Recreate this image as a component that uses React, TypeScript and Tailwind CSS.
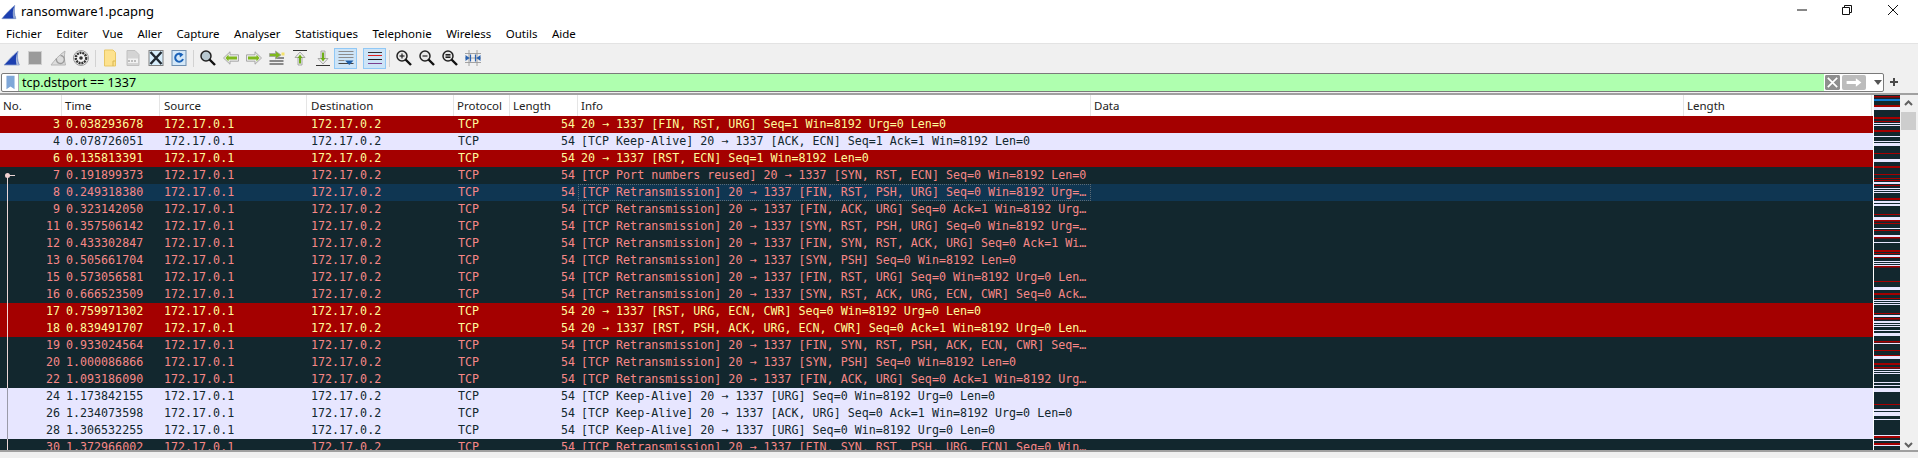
import type { ReactNode } from 'react';

const UI_FONT = "font-['Noto_Sans',sans-serif]";

type Kind = 'rst' | 'keep' | 'bad' | 'sel';

type Packet = { no: number; time: string; kind: Kind; info: string };

const RE = '[TCP Retransmission] 20 → 1337 ';
const KA = '[TCP Keep-Alive] 20 → 1337 ';

const packets: Packet[] = [
  { no: 3, time: '0.038293678', kind: 'rst', info: '20 → 1337 [FIN, RST, URG] Seq=1 Win=8192 Urg=0 Len=0' },
  { no: 4, time: '0.078726051', kind: 'keep', info: KA + '[ACK, ECN] Seq=1 Ack=1 Win=8192 Len=0' },
  { no: 6, time: '0.135813391', kind: 'rst', info: '20 → 1337 [RST, ECN] Seq=1 Win=8192 Len=0' },
  { no: 7, time: '0.191899373', kind: 'bad', info: '[TCP Port numbers reused] 20 → 1337 [SYN, RST, ECN] Seq=0 Win=8192 Len=0' },
  { no: 8, time: '0.249318380', kind: 'sel', info: RE + '[FIN, RST, PSH, URG] Seq=0 Win=8192 Urg=…' },
  { no: 9, time: '0.323142050', kind: 'bad', info: RE + '[FIN, ACK, URG] Seq=0 Ack=1 Win=8192 Urg…' },
  { no: 11, time: '0.357506142', kind: 'bad', info: RE + '[SYN, RST, PSH, URG] Seq=0 Win=8192 Urg=…' },
  { no: 12, time: '0.433302847', kind: 'bad', info: RE + '[FIN, SYN, RST, ACK, URG] Seq=0 Ack=1 Wi…' },
  { no: 13, time: '0.505661704', kind: 'bad', info: RE + '[SYN, PSH] Seq=0 Win=8192 Len=0' },
  { no: 15, time: '0.573056581', kind: 'bad', info: RE + '[FIN, RST, URG] Seq=0 Win=8192 Urg=0 Len…' },
  { no: 16, time: '0.666523509', kind: 'bad', info: RE + '[SYN, RST, ACK, URG, ECN, CWR] Seq=0 Ack…' },
  { no: 17, time: '0.759971302', kind: 'rst', info: '20 → 1337 [RST, URG, ECN, CWR] Seq=0 Win=8192 Urg=0 Len=0' },
  { no: 18, time: '0.839491707', kind: 'rst', info: '20 → 1337 [RST, PSH, ACK, URG, ECN, CWR] Seq=0 Ack=1 Win=8192 Urg=0 Len…' },
  { no: 19, time: '0.933024564', kind: 'bad', info: RE + '[FIN, SYN, RST, PSH, ACK, ECN, CWR] Seq=…' },
  { no: 20, time: '1.000086866', kind: 'bad', info: RE + '[SYN, PSH] Seq=0 Win=8192 Len=0' },
  { no: 22, time: '1.093186090', kind: 'bad', info: RE + '[FIN, ACK, URG] Seq=0 Ack=1 Win=8192 Urg…' },
  { no: 24, time: '1.173842155', kind: 'keep', info: KA + '[URG] Seq=0 Win=8192 Urg=0 Len=0' },
  { no: 26, time: '1.234073598', kind: 'keep', info: KA + '[ACK, URG] Seq=0 Ack=1 Win=8192 Urg=0 Len=0' },
  { no: 28, time: '1.306532255', kind: 'keep', info: KA + '[URG] Seq=0 Win=8192 Urg=0 Len=0' },
  { no: 30, time: '1.372966002', kind: 'bad', info: RE + '[FIN, SYN, RST, PSH, URG, ECN] Seq=0 Win…' },
];

const rowColors: Record<Kind, string> = {
  rst: 'bg-[#a40000] text-[#fffc9c]',
  keep: 'bg-[#e7e6ff] text-[#12272e]',
  bad: 'bg-[#12272e] text-[#f78787]',
  sel: 'bg-[#0f3652] text-[#f78787]',
};

const COLS = 'grid-cols-[62px_98px_147px_147px_56px_68px_513px_593px_188px]';

const menus = ['Fichier', 'Editer', 'Vue', 'Aller', 'Capture', 'Analyser', 'Statistiques', 'Telephonie', 'Wireless', 'Outils', 'Aide'];

// minimap stripes, real y px from the top of the minimap
const R = '#a40000';
const L = '#e7e6ff';
const stripes: [number, number, string][] = [
  [1, 1.5, R], [4, 2, '#0f78d0'], [10, 2, R], [12, 3, L], [22, 2, R], [26, 1, R], [28, 1, L], [30, 1, L],
  [35, 1, R], [36, 1, R], [41, 1, L], [46, 1, L], [48, 3, L], [58, 1, R], [64, 3, L], [71, 2, R], [79, 1, R],
  [83, 1, R], [85, 1, R], [87, 2, L], [90, 1, R], [93, 1, L], [95, 1, L], [97, 1, L], [103, 2, R], [106, 2, L],
  [109, 2, L], [119, 1, R], [122, 3, L], [125, 1.5, R], [128, 1, R], [133, 1, L], [135, 1, R], [140, 2, L],
  [142, 1.5, R], [147, 1, L], [155, 2, R], [158, 1, R], [160, 2, L], [162, 1, R], [166, 1, L], [168, 1, L],
  [170, 1, L], [171, 1.5, R], [186, 1, R], [192, 3, L], [198, 2, R], [203, 1, R], [205, 1, L], [207, 1, L],
  [209, 1, L], [218, 1, R], [220, 2, L], [223, 1.5, R], [226, 2, L], [229, 1, L], [231, 1, L], [235, 1, L],
  [238, 3, L], [246, 1.5, R], [248, 1, L], [255, 1, R], [260, 1, R], [261, 3, L], [268, 2, R], [272, 1.5, R],
  [274, 1, L], [276, 1, L], [278, 1, L], [287, 1, L], [290, 1, L], [293, 4, L], [309, 1, R], [314, 2, L],
  [317, 4, L], [324, 1, L], [340, 1, L], [341, 2, R], [345, 1, L], [348, 2, R], [350, 1, L],
];

function Fin({ className }: { className: string }) {
  return (
    <svg viewBox="0 0 18 16" className={className}>
      <path d="M1 15.500C4 12 9 6 15.500 .5c-1 5-.6 10 1.300 15z" fill="#1c3fb0" stroke="#7f96c8" strokeWidth=".7" />
      <path d="M15 1.500c-2 4-2.200 9-1 14h3c-2-4.500-2.500-9-2-14z" fill="#8fa4d0" />
    </svg>
  );
}

function Ic({ children, box }: { children: ReactNode; box?: boolean }) {
  return (
    <div className={`flex h-[21px] w-[23px] shrink-0 items-center justify-center ${box ? 'border border-[#90c8f6] bg-[#cde4f7]' : ''}`}>
      <svg viewBox="0 0 18 18" className="h-[18px] w-[18px]">{children}</svg>
    </div>
  );
}

function Sep() {
  return <div className="mx-[2.5px] h-[17px] w-px shrink-0 bg-[#d2d2d2]" />;
}

function Magnifier({ sign }: { sign?: '+' | '-' | '=' }) {
  return (
    <Ic>
      <circle cx="7" cy="7" r="5" fill={sign ? '#e8e8e8' : '#b8c8d0'} stroke="#222" strokeWidth="1.500" />
      <path d="M10.500 10.500l5.500 5.500" stroke="#111" strokeWidth="2.400" />
      {sign && <path d="M4.500 7h5" stroke="#222" strokeWidth="1.200" />}
      {sign === '+' && <path d="M7 4.500v5" stroke="#222" strokeWidth="1.200" />}
      {sign === '=' && <path d="M4.500 5.500h5M4.500 8.500h5" stroke="#222" strokeWidth="1.200" />}
    </Ic>
  );
}

function ArrowH({ dir }: { dir: 'l' | 'r' }) {
  return (
    <Ic>
      <g transform={dir === 'l' ? 'matrix(-1 0 0 1 18 0)' : undefined}>
        <path d="M1.500 5.800h8.500V2.800l6.500 6.200-6.500 6.200v-3H1.500z" fill="#ececec" stroke="#a0a0a0" strokeWidth=".9" />
        <path d="M3 7.500h8.500V5.500l3 3.500-3 3.500v-2H3z" fill="#7fb81e" />
      </g>
    </Ic>
  );
}

function ArrowV({ up }: { up?: boolean }) {
  return (
    <Ic>
      <g transform={up ? undefined : 'matrix(1 0 0 -1 0 18)'}>
        <path d="M2 1.500h14" stroke="#333" />
        <path d="M9 3l5 5.500h-3V16H7V8.500H4z" fill="#ececec" stroke="#a0a0a0" strokeWidth=".9" />
        <path d="M9 5.500l2.500 3.500H10v5.500H8V9H6.500z" fill="#6fae18" />
      </g>
    </Ic>
  );
}

function Toolbar() {
  return (
    <div className="flex h-[27px] items-center pt-[1px]">
      <Ic>
        <g transform="translate(1 2)">
          <path d="M0 14C3 11 8 5 14 0c-1 5-.6 9.500 1.300 14z" fill="#1c3fb0" stroke="#8ba0cc" strokeWidth=".8" />
          <path d="M13.500 1c-1.800 4-2 9-1 13h2.500c-1.800-4-2.200-8.500-1.500-13z" fill="#a8b8d8" />
        </g>
      </Ic>
      <Ic><rect x="2.500" y="2.500" width="13" height="13" fill="#9a9a9a" stroke="#cfcfcf" /></Ic>
      <Ic>
        <path d="M2 16C5 12 10 6 16 2c-1 5-.6 10 .5 14z" fill="#dcdcdc" stroke="#b4b4b4" />
        <path d="M11.500 6.500a4 4 0 1 1-4 3" fill="none" stroke="#9c9c9c" strokeWidth="1.400" />
      </Ic>
      <Ic>
        <circle cx="9" cy="9" r="7.500" fill="#f4f4f4" stroke="#9a9a9a" />
        <circle cx="9" cy="9" r="5.200" fill="none" stroke="#333" strokeWidth="2.400" strokeDasharray="2 .8" />
        <circle cx="9" cy="9" r="1.800" fill="#333" />
      </Ic>
      <Sep />
      <Ic><path d="M3.500 1h8.500l2.500 2.500V17h-11z" fill="#fde28e" stroke="#e8c764" /><path d="M12 12v5M12 12h2.500" stroke="#d8b650" fill="none" /></Ic>
      <Ic>
        <path d="M3 1.500h8l4 4V16.500H3z" fill="#d4d4d4" stroke="#c0c0c0" />
        <rect x="4" y="9.500" width="10" height="4.500" fill="#f2f2f2" />
        <path d="M5 11v2M8 11v2M11 11v2" stroke="#9a9a9a" strokeWidth="1.200" />
      </Ic>
      <Ic>
        <rect x="2" y="1.500" width="14" height="15" fill="#d8eefc" stroke="#7f7f7f" />
        <path d="M3.500 3l11 12M14.500 3l-11 12" stroke="#202830" strokeWidth="2.400" />
      </Ic>
      <Ic>
        <rect x="2" y="1.500" width="14" height="15" fill="#d4e8f8" stroke="#6f8fb0" />
        <path d="M13 10a4 4 0 1 1-1.300-4.400" fill="none" stroke="#1a62b8" strokeWidth="2" />
        <path d="M9 3.500l4.500 2-3.500 3z" fill="#1a62b8" />
      </Ic>
      <Sep />
      <Magnifier />
      <ArrowH dir="l" />
      <ArrowH dir="r" />
      <Ic>
        <path d="M1.500 15h14M1.500 12h14M8 9h8" stroke="#222" strokeWidth="1.100" />
        <path d="M1.500 4.500h6V2l5.500 4-5.500 4V7.500h-6z" fill="#7fb81e" stroke="#a0a0a0" strokeWidth=".8" />
        <rect x="13.500" y="3.500" width="3" height="3" fill="#f5e26a" />
      </Ic>
      <ArrowV up />
      <ArrowV />
      <Ic box>
        <path d="M1.500 2.500h15M1.500 5.500h15M1.500 8.500h15M1.500 11.500h6" stroke="#8c8c8c" strokeWidth="1" />
        <path d="M1.500 14.500h15" stroke="#444" />
        <path d="M8 11.500h8.500l-4.200 4.500z" fill="#1f5fa8" />
      </Ic>
      <div className="w-[6px] shrink-0" />
      <Ic box>
        <path d="M2 3.500h14" stroke="#333" strokeWidth="1" />
        <path d="M2 6.500h14" stroke="#e02020" strokeWidth="1" />
        <path d="M2 10.500h14" stroke="#222" strokeWidth="1" />
        <path d="M2 14.500h14" stroke="#7a3f90" strokeWidth="1" />
      </Ic>
      <Sep />
      <Magnifier sign="+" />
      <Magnifier sign="-" />
      <Magnifier sign="=" />
      <Ic>
        <path d="M1 4.500h16M1 9h16M1 13.500h16M5 1v16M13 1v16" stroke="#9a9a9a" strokeWidth=".9" />
        <path d="M1.500 6v6l4-3zM16.500 6v6l-4-3z" fill="#2a62b0" />
        <path d="M6.500 5.500v7M11.500 5.500v7" stroke="#2a62b0" strokeWidth="1.200" />
      </Ic>
    </div>
  );
}

function FilterBar() {
  return (
    <div className="flex h-[22px] items-start pt-[2px]">
      <div className="ml-px flex h-[19px] w-[1883px] items-stretch overflow-hidden rounded-[2px] border border-[#7a7a7a] bg-white">
        <div className="flex w-[17px] shrink-0 items-center justify-center border-r border-[#b0b0b0]">
          <svg viewBox="0 0 10 16" className="h-[15px] w-[9px]"><path d="M.5 .5h9v15l-4.500-3-4.500 3z" fill="#7fa7d8" /></svg>
        </div>
        <div className={`flex-1 bg-[#afffaf] pl-[3px] text-[12.5px] leading-[17px] text-black ${UI_FONT}`}>tcp.dstport == 1337</div>
        <div className="flex w-[59px] shrink-0 items-center">
          <svg viewBox="0 0 16 16" className="ml-px h-[15px] w-[15px] shrink-0">
            <rect width="16" height="16" rx="1.500" fill="#8e8e8e" />
            <path d="M3 3l10 10M13 3L3 13" stroke="#fff" strokeWidth="1.800" />
          </svg>
          <svg viewBox="0 0 26 16" className="ml-[2px] h-[15px] w-[24px] shrink-0">
            <rect width="26" height="16" rx="2" fill="#bcbcbc" />
            <path d="M5 6.500h10V3.500l6 4.500-6 4.500v-3H5z" fill="#fff" />
          </svg>
          <svg viewBox="0 0 8 5" className="ml-[8px] h-[5px] w-[8px] shrink-0"><path d="M0 0h8L4 5z" fill="#555" /></svg>
        </div>
      </div>
      <svg viewBox="0 0 10 10" className="ml-[5px] mt-[4px] h-[10px] w-[10px] shrink-0"><path d="M5 1v8M1 5h8" stroke="#4a4a4a" strokeWidth="2" /></svg>
    </div>
  );
}

function Row({ p }: { p: Packet }) {
  const infoClass = p.kind === 'sel' ? 'border border-dotted border-[#5c6b76] pl-[2px] leading-[15px]' : 'pl-[3px]';
  return (
    <div className={`grid h-[17px] shrink-0 ${COLS} text-[11.66px] leading-[17px] whitespace-pre font-['DejaVu_Sans_Mono',monospace] ${rowColors[p.kind]}`}>
      <div className="pr-[2px] text-right">{p.no}</div>
      <div className="pl-[4px]">{p.time}</div>
      <div className="pl-[4px]">172.17.0.1</div>
      <div className="pl-[4px]">172.17.0.2</div>
      <div className="pl-[4px]">TCP</div>
      <div className="pr-[3px] text-right">54</div>
      <div className={infoClass}>{p.info}</div>
      <div />
      <div />
    </div>
  );
}

function PacketList() {
  const headers = ['No.', 'Time', 'Source', 'Destination', 'Protocol', 'Length', 'Info', 'Data', 'Length'];
  return (
    <div className="relative w-[1873px] shrink-0 overflow-hidden">
      <div className={`grid h-[21px] ${COLS} bg-white text-[11.5px] leading-[21px] text-[#222] ${UI_FONT}`}>
        {headers.map((h, i) => (
          <div key={i} className={`border-r border-[#e5e5e5] ${i === 2 || i === 3 ? 'pl-[4px]' : 'pl-[3px]'}`}>{h}</div>
        ))}
      </div>
      <div className="flex flex-col">
        {packets.map((p) => <Row key={p.no} p={p} />)}
      </div>
      {/* conversation line over the rows */}
      <svg className="absolute left-0 top-[21px] h-[336px] w-[20px]" viewBox="0 0 20 336">
        <path d="M7.500 59V187" stroke="#ecd6d6" />
        <path d="M7.500 187V221" stroke="#fff" strokeOpacity=".85" />
        <path d="M7.500 221V272" stroke="#ecd6d6" />
        <path d="M7.500 272V323" stroke="#9a9aa8" />
        <path d="M7.500 323V336" stroke="#ecd6d6" />
        <path d="M8 59.500h7" stroke="#ecd6d6" />
        <circle cx="7.500" cy="59.500" r="2.500" fill="#f0d0d0" />
      </svg>
    </div>
  );
}

function Minimap() {
  return (
    <svg className="h-[355px] w-[26px] shrink-0" viewBox="0 0 26 355">
      <rect width="26" height="355" fill="#12272e" />
      {stripes.map(([y, h, c], i) => <rect key={i} y={y} width="26" height={h} fill={c} />)}
    </svg>
  );
}

function Scrollbar() {
  return (
    <div className="flex w-[18px] shrink-0 flex-col items-center bg-[#f0f0f0] pr-px">
      <svg viewBox="0 0 9 6" className="mt-[5px] h-[6px] w-[9px]"><path d="M1 5l3.500-3.500L8 5" fill="none" stroke="#606060" strokeWidth="2" /></svg>
      <div className="mt-[6px] h-[18px] w-[15px] bg-[#cdcdcd]" />
      <div className="flex-1" />
      <svg viewBox="0 0 9 6" className="mb-[2px] h-[6px] w-[9px]"><path d="M1 1l3.500 3.500L8 1" fill="none" stroke="#606060" strokeWidth="2" /></svg>
    </div>
  );
}

export default function App() {
  return (
    <div className={`flex h-[458px] w-[1918px] flex-col overflow-hidden bg-white ${UI_FONT}`}>
      <div className="flex h-[25px] shrink-0 items-center">
        <Fin className="ml-px mb-[2px] h-[16px] w-[16px] shrink-0" />
        <span className="ml-[4px] mb-px text-[13px] text-black">ransomware1.pcapng</span>
        <div className="flex-1" />
        <svg viewBox="0 0 10 10" className="mr-[35px] mb-[5px] h-[10px] w-[10px]"><path d="M0 5h10" stroke="#111" /></svg>
        <svg viewBox="0 0 10 10" className="mr-[36px] mb-[5px] h-[10px] w-[10px]"><path d="M.5 2.500h7v7h-7zM2.500 2.500v-2h7v7h-2" fill="none" stroke="#111" /></svg>
        <svg viewBox="0 0 10 10" className="mr-[20px] mb-[5px] h-[10px] w-[10px]"><path d="M0 0l10 10M10 0L0 10" stroke="#111" /></svg>
      </div>
      <div className="flex h-[18px] shrink-0 items-center gap-[14.5px] pl-[6px] text-[11.5px] text-black">
        {menus.map((m) => <span key={m}>{m}</span>)}
      </div>
      <div className="shrink-0 border-t border-[#e3e3e3] bg-[#f0f0f0]">
        <Toolbar />
        <FilterBar />
      </div>
      <div className="flex h-[357px] shrink-0 border-t-2 border-[#a0a0a0]">
        <PacketList />
        <div className="w-px" />
        <Minimap />
        <Scrollbar />
      </div>
      <div className="flex-1 border-t-2 border-[#a0a0a0] bg-[#f0f0f0]" />
    </div>
  );
}
